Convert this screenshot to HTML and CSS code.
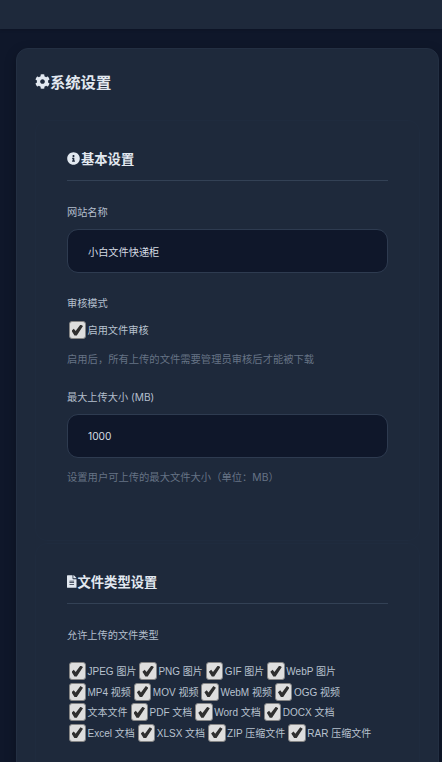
FILE: index.html
```html
<!DOCTYPE html>
<html lang="zh-CN">
<head>
  <meta charset="UTF-8" />
  <meta name="viewport" content="width=device-width, initial-scale=1.0" />
  <title>系统设置</title>
  <link rel="stylesheet" href="styles.css">
</head>
<body>
  <header class="topbar"></header>

  <main class="card">
    <h2 class="card-title">
      <svg class="icon" viewBox="0 0 512 512"><path d="M487.4 315.7l-42.6-24.6c4.3-23.2 4.3-47 0-70.2l42.6-24.6c4.9-2.8 7.1-8.6 5.5-14-11.1-35.6-30-67.8-54.7-94.6-3.8-4.1-10-5.1-14.8-2.3L380.8 110c-17.9-15.4-38.5-27.3-60.8-35.1V25.8c0-5.6-3.9-10.5-9.4-11.7-36.7-8.2-74.3-7.8-109.2 0-5.5 1.2-9.4 6.1-9.4 11.7V75c-22.2 7.9-42.8 19.8-60.8 35.1L88.7 85.5c-4.9-2.8-11-1.9-14.8 2.3-24.7 26.7-43.6 58.9-54.7 94.6-1.7 5.4.6 11.2 5.5 14L67.3 221c-4.3 23.2-4.3 47 0 70.2l-42.6 24.6c-4.9 2.8-7.1 8.6-5.5 14 11.1 35.6 30 67.8 54.7 94.6 3.8 4.1 10 5.1 14.8 2.3l42.6-24.6c17.9 15.4 38.5 27.3 60.8 35.1v49.2c0 5.6 3.9 10.5 9.4 11.7 36.7 8.2 74.3 7.8 109.2 0 5.5-1.2 9.4-6.1 9.4-11.7v-49.2c22.2-7.9 42.8-19.8 60.8-35.1l42.6 24.6c4.9 2.8 11 1.9 14.8-2.3 24.7-26.7 43.6-58.9 54.7-94.6 1.5-5.5-.7-11.3-5.6-14.1zM256 336c-44.1 0-80-35.9-80-80s35.9-80 80-80 80 35.9 80 80-35.9 80-80 80z"/></svg>
      系统设置
    </h2>

    <section class="panel">
      <h3 class="panel-title">
        <svg class="icon" viewBox="0 0 512 512"><path d="M256 8C119 8 8 119.1 8 256c0 137 111 248 248 248s248-111 248-248C504 119.1 393 8 256 8zm0 110c23.2 0 42 18.8 42 42s-18.8 42-42 42-42-18.8-42-42 18.8-42 42-42zm56 254c0 6.6-5.4 12-12 12h-88c-6.6 0-12-5.4-12-12v-24c0-6.6 5.4-12 12-12h12v-64h-12c-6.6 0-12-5.4-12-12v-24c0-6.6 5.4-12 12-12h64c6.6 0 12 5.4 12 12v100h12c6.6 0 12 5.4 12 12v24z"/></svg>
        基本设置
      </h3>

      <div class="field">
        <label class="field-label">网站名称</label>
        <input class="text-input" type="text" value="小白文件快递柜">
      </div>

      <div class="field">
        <label class="field-label">审核模式</label>
        <label class="check solo"><input type="checkbox" checked>启用文件审核</label>
        <p class="hint">启用后，所有上传的文件需要管理员审核后才能被下载</p>
      </div>

      <div class="field">
        <label class="field-label">最大上传大小 (MB)</label>
        <input class="text-input" type="text" value="1000">
        <p class="hint">设置用户可上传的最大文件大小（单位：MB）</p>
      </div>
    </section>

    <section class="panel">
      <h3 class="panel-title">
        <svg class="icon icon-file" viewBox="0 0 384 512"><path d="M224 136V0H24C10.7 0 0 10.7 0 24v464c0 13.3 10.7 24 24 24h336c13.3 0 24-10.7 24-24V160H248c-13.2 0-24-10.8-24-24zm64 236c0 6.6-5.4 12-12 12H108c-6.6 0-12-5.4-12-12v-8c0-6.6 5.4-12 12-12h168c6.6 0 12 5.4 12 12v8zm0-64c0 6.6-5.4 12-12 12H108c-6.6 0-12-5.4-12-12v-8c0-6.6 5.4-12 12-12h168c6.6 0 12 5.4 12 12v8zm0-72v8c0 6.6-5.4 12-12 12H108c-6.6 0-12-5.4-12-12v-8c0-6.6 5.4-12 12-12h168c6.6 0 12 5.4 12 12zm96-114.1v6.1H256V0h6.1c6.4 0 12.5 2.5 17 7l97.9 98c4.5 4.5 7 10.6 7 16.9z"/></svg>
        文件类型设置
      </h3>

      <div class="field">
        <label class="field-label">允许上传的文件类型</label>
        <div class="check-list">
          <label class="check"><input type="checkbox" checked>JPEG 图片</label>
          <label class="check"><input type="checkbox" checked>PNG 图片</label>
          <label class="check"><input type="checkbox" checked>GIF 图片</label>
          <label class="check"><input type="checkbox" checked>WebP 图片</label>
          <label class="check"><input type="checkbox" checked>MP4 视频</label>
          <label class="check"><input type="checkbox" checked>MOV 视频</label>
          <label class="check"><input type="checkbox" checked>WebM 视频</label>
          <label class="check"><input type="checkbox" checked>OGG 视频</label>
          <label class="check"><input type="checkbox" checked>文本文件</label>
          <label class="check"><input type="checkbox" checked>PDF 文档</label>
          <label class="check"><input type="checkbox" checked>Word 文档</label>
          <label class="check"><input type="checkbox" checked>DOCX 文档</label>
          <label class="check"><input type="checkbox" checked>Excel 文档</label>
          <label class="check"><input type="checkbox" checked>XLSX 文档</label>
          <label class="check"><input type="checkbox" checked>ZIP 压缩文件</label>
          <label class="check"><input type="checkbox" checked>RAR 压缩文件</label>
        </div>
      </div>
    </section>
  </main>
</body>
</html>
```

FILE: styles.css
```css
* {
  box-sizing: border-box;
}
html, body {
  height: 100%;
}
body {
  margin: 0;
  overflow: hidden;
  background-color: #0f172a;
  color: #e2e8f0;
  font-family: Inter, "Noto Sans CJK SC", sans-serif;
  font-size: 10.2px;
}
.topbar {
  height: 29px;
  background-color: #1e293b;
  box-shadow: 0 1px 3px rgba(0, 0, 0, 0.15);
}
.card {
  margin: 19px 3px 0 16px;
  padding: 0 18px;
  background-color: #1e293b;
  border: 1px solid #232f42;
  border-radius: 12px;
  box-shadow: 0 4px 12px rgba(0, 0, 0, 0.25);
}
.card-title {
  display: flex;
  align-items: center;
  height: 71px;
  margin: 0;
  padding-bottom: 7px;
  font-size: 15.3px;
  font-weight: 700;
}
.icon {
  flex: none;
  fill: currentColor;
}
.card-title .icon {
  width: 15px;
  height: 15px;
}
.panel {
  padding: 0 31px 32px;
  border: 1px solid #1f2b3e;
  border-radius: 12px;
}
.panel + .panel {
  margin-top: 2px;
}
.panel-title {
  display: flex;
  align-items: center;
  gap: 1px;
  height: 60px;
  margin: 0 0 24px;
  padding-top: 16px;
  border-bottom: 1px solid #334155;
  font-size: 13.3px;
  font-weight: 700;
}
.panel-title .icon {
  width: 13px;
  height: 13px;
}
.panel-title .icon-file {
  width: 9.5px;
}
.field {
  margin-bottom: 23px;
}
.field-label {
  display: block;
  margin-bottom: 10px;
  color: #b4bfcd;
  line-height: 14px;
}
.text-input {
  display: block;
  width: 100%;
  height: 44px;
  padding: 0 20px;
  background-color: #0f172a;
  border: 1px solid #2e3b50;
  border-radius: 11px;
  color: #d5dbe3;
  font: inherit;
}
.hint {
  margin: 12px 0 0;
  color: #667385;
  font-size: 10.3px;
  line-height: 15px;
}
.check {
  display: inline-flex;
  align-items: center;
  gap: 1.5px;
  padding-top: 2px;
  color: #b8c2cf;
  font-family: "Liberation Sans", "Noto Sans CJK SC", sans-serif;
  font-size: 10px;
  line-height: 18px;
}
.check.solo {
  display: flex;
  margin-top: 10px;
  font-size: 10.2px;
}
.check input {
  position: relative;
  appearance: none;
  flex: none;
  width: 17.5px;
  height: 18px;
  margin: -2px 0 0 1.5px;
  background-color: #dedede;
  border: 1px solid #858585;
  border-radius: 3px;
}
.check input:checked::after {
  content: "";
  position: absolute;
  inset: 2.5px 2px 2.5px 2px;
  background-color: #2f2f2f;
  clip-path: polygon(0 56%, 20% 38%, 36% 58%, 78% 0, 100% 14%, 46% 100%, 26% 100%);
}
.check-list {
  display: flex;
  flex-wrap: wrap;
  gap: 0.6px 1.5px;
  margin-top: 19px;
}
```
